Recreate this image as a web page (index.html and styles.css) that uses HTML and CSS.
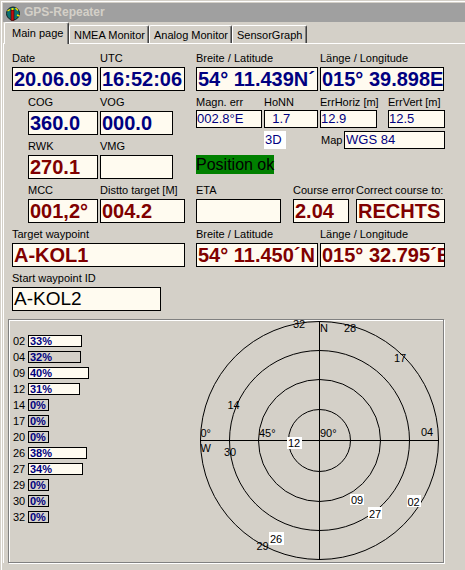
FILE: index.html
```html
<!DOCTYPE html>
<html lang="de">
<head>
    <meta charset="UTF-8">
    <title>GPS-Repeater</title>
    <link rel="stylesheet" href="styles.css">
</head>
<body>
<div class="window">
    <div class="titlebar">
        <svg class="app-icon" width="16" height="16" viewBox="0 0 16 16">
            <circle cx="8" cy="8.5" r="6.5" fill="#0a7070" stroke="#102020"/>
            <path d="M2.5 6 L5 4.5 M10.5 3 L13 5.5 M12 10 L14.5 11" stroke="#f0e000" stroke-width="1.4"/>
            <rect x="6" y="5" width="3" height="10.5" fill="#c01010" stroke="#300" stroke-width="0.6"/>
            <rect x="6.5" y="3" width="2" height="2" fill="#f0e000"/>
        </svg>
        <span>GPS-Repeater</span>
    </div>

    <div class="tabs">
        <div class="tab active tab-main">Main page</div>
        <div class="tab tab-nmea">NMEA Monitor</div>
        <div class="tab tab-analog">Analog Monitor</div>
        <div class="tab tab-sensor">SensorGraph</div>
    </div>

    <div class="page">
        <div class="form">
            <!-- Datum / Zeit / Position -->
            <div class="row">
                <div class="group left">
                    <div class="field f-date"><label>Date</label><div class="box big blue">20.06.09</div></div>
                    <div class="field f-utc"><label>UTC</label><div class="box big blue">16:52:06</div></div>
                </div>
                <div class="group">
                    <div class="field f-lat"><label>Breite / Latitude</label><div class="box big blue">54° 11.439N´</div></div>
                    <div class="field f-lon"><label>Länge / Longitude</label><div class="box big blue">015° 39.898E</div></div>
                </div>
            </div>

            <div class="row">
                <div class="left indent stack">
                    <div class="group">
                        <div class="field f-cog"><label>COG</label><div class="box big blue">360.0</div></div>
                        <div class="field f-vog"><label>VOG</label><div class="box big blue">000.0</div></div>
                    </div>
                    <div class="group">
                        <div class="field f-cog"><label>RWK</label><div class="box big red">270.1</div></div>
                        <div class="field f-vog"><label>VMG</label><div class="box big red"></div></div>
                    </div>
                </div>
                <div class="right">
                    <div class="group">
                        <div class="field small f-magn"><label>Magn. err</label><div class="sbox">002.8°E</div></div>
                        <div class="field small f-honn"><label>HoNN</label><div class="sbox">  1.7</div></div>
                        <div class="field small f-err"><label>ErrHoriz [m]</label><div class="sbox">12.9</div></div>
                        <div class="field small f-err f-errv"><label>ErrVert [m]</label><div class="sbox">12.5</div></div>
                    </div>
                    <div class="map-row">
                        <div class="fix">3D</div>
                        <span class="map-label">Map</span>
                        <div class="sbox map">WGS 84</div>
                    </div>
                    <div class="status">Position ok</div>
                </div>
            </div>

            <!-- Kurs / Ziel -->
            <div class="row">
                <div class="group left indent">
                    <div class="field f-cog"><label>MCC</label><div class="box big red">001,2°</div></div>
                    <div class="field f-utc"><label>Distto target [M]</label><div class="box big red">004.2</div></div>
                </div>
                <div class="group">
                    <div class="field f-eta"><label>ETA</label><div class="box big red"></div></div>
                    <div class="field f-cerr"><label>Course error</label><div class="box big red">2.04</div></div>
                    <div class="field f-corr"><label>Correct course to:</label><div class="box big red">RECHTS</div></div>
                </div>
            </div>

            <div class="row">
                <div class="group left">
                    <div class="field f-target"><label>Target waypoint</label><div class="box big red">A-KOL1</div></div>
                </div>
                <div class="group">
                    <div class="field f-lat"><label>Breite / Latitude</label><div class="box big red">54° 11.450´N</div></div>
                    <div class="field f-lon2"><label>Länge / Longitude</label><div class="box big red">015° 32.795´E</div></div>
                </div>
            </div>

            <div class="row">
                <div class="field f-start"><label>Start waypoint ID</label><div class="box plain">A-KOL2</div></div>
            </div>
        </div>

        <!-- Satelliten -->
        <div class="panel">
            <div class="sats">
                <div class="sat"><span class="prn">02</span><div class="bar used" style="width:54px">33%</div></div>
                <div class="sat"><span class="prn">04</span><div class="bar" style="width:53px">32%</div></div>
                <div class="sat"><span class="prn">09</span><div class="bar used" style="width:61px">40%</div></div>
                <div class="sat"><span class="prn">12</span><div class="bar used" style="width:52px">31%</div></div>
                <div class="sat"><span class="prn">14</span><div class="bar" style="width:21px">0%</div></div>
                <div class="sat"><span class="prn">17</span><div class="bar" style="width:21px">0%</div></div>
                <div class="sat"><span class="prn">20</span><div class="bar" style="width:21px">0%</div></div>
                <div class="sat"><span class="prn">26</span><div class="bar used" style="width:59px">38%</div></div>
                <div class="sat"><span class="prn">27</span><div class="bar used" style="width:55px">34%</div></div>
                <div class="sat"><span class="prn">29</span><div class="bar" style="width:21px">0%</div></div>
                <div class="sat"><span class="prn">30</span><div class="bar" style="width:21px">0%</div></div>
                <div class="sat"><span class="prn">32</span><div class="bar" style="width:21px">0%</div></div>
            </div>

            <svg class="sky" width="248" height="242" viewBox="0 0 248 242">
                <g fill="none" stroke="#000" stroke-width="1">
                    <circle cx="124.5" cy="120.5" r="31"/>
                    <circle cx="124.5" cy="120.5" r="61"/>
                    <circle cx="124.5" cy="120.5" r="90"/>
                    <circle cx="124.5" cy="120.5" r="119"/>
                    <line x1="124.5" y1="1" x2="124.5" y2="240"/>
                    <line x1="5" y1="120.5" x2="244" y2="120.5"/>
                </g>
                <g class="sky-text">
                    <text x="98" y="8">32</text>
                    <text x="125" y="12">N</text>
                    <text x="149" y="12">28</text>
                    <text x="199" y="42">17</text>
                    <text x="32.5" y="89">14</text>
                    <text x="5.5" y="117">0°</text>
                    <text x="5.5" y="132">W</text>
                    <text x="64" y="117">45°</text>
                    <text x="125" y="117">90°</text>
                    <text x="226" y="116">04</text>
                    <text x="29" y="136">30</text>
                    <text x="61.5" y="229.5">29</text>

                    <rect x="92" y="117" width="15" height="12"/>
                    <text x="93" y="127">12</text>
                    <rect x="155" y="174" width="14" height="11"/>
                    <text x="156" y="183.5">09</text>
                    <rect x="212" y="175" width="14" height="12"/>
                    <text x="212.5" y="185.5">02</text>
                    <rect x="173" y="187" width="14" height="12"/>
                    <text x="174" y="197.5">27</text>
                    <rect x="74" y="212" width="15" height="13"/>
                    <text x="75" y="222.5">26</text>
                </g>
            </svg>
        </div>
    </div>
</div>
</body>
</html>
```

FILE: styles.css
```css
* {
    box-sizing: border-box;
}

body {
    margin: 0;
    background: #d4d0c8;
    font-family: "Liberation Sans", Arial, sans-serif;
    font-size: 11px;
    line-height: 13px;
    color: #000;
    overflow: hidden;
}

.window {
    min-height: 570px;
    padding: 3px 0 0 3px;
    box-shadow: inset 1px 1px 0 #d4d0c8, inset 2px 2px 0 #fff;
}

/* Titelleiste (inaktiv) */
.titlebar {
    height: 19px;
    display: flex;
    align-items: center;
    gap: 3px;
    padding-left: 2px;
    background: #a0a0a0;
    color: #d4d0c8;
    font-size: 12px;
    font-weight: bold;
    line-height: 19px;
}

.app-icon {
    flex: none;
}

/* Registerkarten */
.tabs {
    height: 21px;
    display: flex;
    align-items: flex-end;
}

.tab {
    height: 18px;
    padding: 3px 0 0 4px;
    border-top: 1px solid #fff;
    border-left: 1px solid #fff;
    border-right: 1px solid #404040;
    border-radius: 2px 2px 0 0;
    box-shadow: inset -1px 0 0 #808080;
    white-space: nowrap;
}

.tab.active {
    position: relative;
    z-index: 1;
    height: 22px;
    margin-bottom: -1px;
    padding: 4px 0 0 7px;
    background: #d4d0c8;
}

.tab-main { width: 65px; margin-left: 1px; }
.tab-nmea { width: 80px; }
.tab-analog { width: 83px; }
.tab-sensor { width: 75px; }

.page {
    padding-top: 8px;
    border-top: 1px solid #fff;
    border-left: 1px solid #fff;
}

/* Formular */
.form {
    display: flex;
    flex-direction: column;
    gap: 5px;
    padding-left: 8px;
}

.row {
    display: flex;
    gap: 11px;
}

.group {
    display: flex;
    gap: 2px;
}

.left {
    flex: none;
    width: 173px;
}

.indent {
    padding-left: 16px;
}

.stack {
    display: flex;
    flex-direction: column;
    gap: 5px;
}

.right {
    display: flex;
    flex-direction: column;
}

.field {
    display: flex;
    flex-direction: column;
}

.field label {
    margin-bottom: 2px;
    white-space: nowrap;
}

.field.small label {
    margin-bottom: 1px;
}

.box {
    height: 24px;
    padding-left: 1px;
    border: 1px solid #000;
    background: #fffbf0;
    overflow: hidden;
    white-space: nowrap;
}

.box.big {
    font-size: 20px;
    font-weight: bold;
    line-height: 22px;
}

.box.plain {
    font-size: 19px;
    line-height: 22px;
}

.blue { color: #000080; }
.red { color: #800000; }

.sbox {
    height: 18px;
    border: 1px solid #000;
    background: #fffbf0;
    color: #000080;
    font-size: 13px;
    line-height: 16px;
    white-space: pre;
    overflow: hidden;
}

.f-date { width: 86px; }
.f-utc { width: 85px; }
.f-lat { width: 122px; }
.f-lon { width: 124px; }
.f-lon2 { width: 125px; }
.f-cog { width: 70px; }
.f-vog { width: 73px; }
.f-magn { width: 66px; }
.f-honn { width: 54px; }
.f-err { width: 57px; }
.f-errv { margin-left: 9px; }
.f-eta { width: 85px; }
.f-cerr { width: 56px; margin-left: 10px; }
.f-corr { width: 89px; margin-left: 5px; }
.f-target { width: 174px; }
.f-start { width: 149px; }

.map-row {
    display: flex;
    margin: 3px 0 0 68px;
}

.fix {
    width: 22px;
    height: 18px;
    padding-left: 1px;
    background: #fff;
    color: #000080;
    font-size: 13px;
    line-height: 18px;
}

.map-label {
    width: 23px;
    margin-left: 35px;
    line-height: 18px;
}

.sbox.map {
    width: 101px;
    padding-left: 1px;
}

.status {
    width: 78px;
    height: 19px;
    margin-top: 6px;
    background: #008000;
    font-size: 16px;
    line-height: 19px;
    white-space: nowrap;
}

/* Satellitenanzeige */
.panel {
    display: flex;
    width: 436px;
    height: 244px;
    margin: 8px 0 0 4px;
    border: 1px solid #808080;
    box-shadow: inset 1px 1px 0 #fff, 1px 1px 0 #fff;
}

.sats {
    flex: none;
    width: 186px;
    padding: 15px 0 0 4px;
}

.sat {
    display: flex;
    height: 16px;
}

.prn {
    width: 15px;
    line-height: 13px;
}

.bar {
    height: 12px;
    padding-left: 1px;
    border: 1px solid #000;
    background: #d4d0c8;
    color: #000080;
    font-weight: bold;
    line-height: 10px;
}

.bar.used {
    background: #fffbf0;
}

.sky {
    flex: none;
    display: block;
}

.sky-text {
    font-family: "Liberation Sans", Arial, sans-serif;
    font-size: 11px;
    fill: #000;
}

.sky-text rect {
    fill: #fff;
}
```
